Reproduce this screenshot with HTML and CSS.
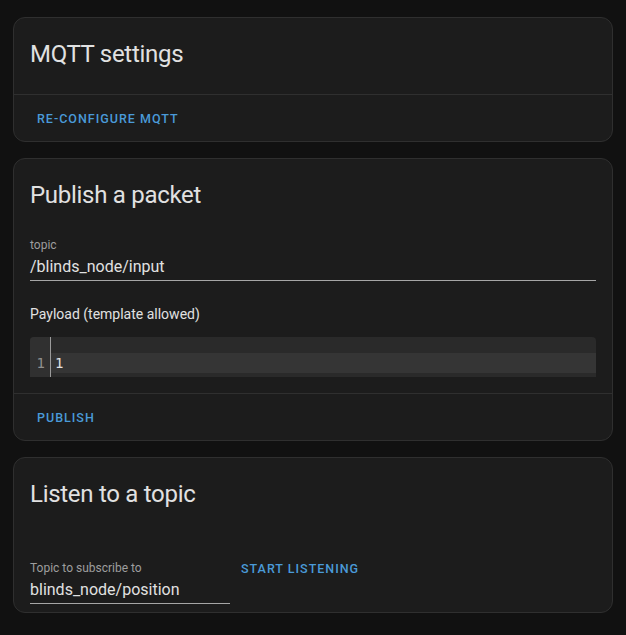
FILE: index.html
```html
<!DOCTYPE html>
<html lang="en">
<head>
<meta charset="utf-8">
<title>MQTT settings</title>
<link rel="stylesheet" href="styles.css">
</head>
<body>
<main class="page">
  <section class="card">
    <h1 class="card-header">MQTT settings</h1>
    <div class="card-actions">
      <button class="btn" type="button">Re-configure MQTT</button>
    </div>
  </section>

  <section class="card">
    <h1 class="card-header">Publish a packet</h1>
    <div class="card-content publish">
      <div class="field">
        <span class="field-label">topic</span>
        <span class="field-value">/blinds_node/input</span>
      </div>
      <p class="payload-label">Payload (template allowed)</p>
      <div class="editor">
        <div class="gutter"><div class="gutter-line">1</div></div>
        <div class="code"><div class="code-line">1</div></div>
      </div>
    </div>
    <div class="card-actions">
      <button class="btn" type="button">Publish</button>
    </div>
  </section>

  <section class="card">
    <h1 class="card-header">Listen to a topic</h1>
    <div class="card-content listen">
      <div class="field field-narrow">
        <span class="field-label">Topic to subscribe to</span>
        <span class="field-value">blinds_node/position</span>
      </div>
      <button class="btn btn-listen" type="button">Start listening</button>
    </div>
  </section>
</main>
</body>
</html>
```

FILE: styles.css
```css
* {
  box-sizing: border-box;
}

html, body {
  margin: 0;
  padding: 0;
  background: #111111;
}

body {
  font-family: Roboto, "Noto Sans", sans-serif;
  color: #e1e1e1;
}

.page {
  display: flex;
  flex-direction: column;
  gap: 16px;
  padding: 17px 13px 0;
}

.card {
  background: #1c1c1c;
  border: 1px solid #2f2f2f;
  border-radius: 12px;
}

.card-header {
  margin: 0;
  padding: 12px 16px 16px;
  font-size: 24px;
  font-weight: 400;
  line-height: 48px;
  letter-spacing: -0.012em;
  color: #e1e1e1;
}

.card-content {
  padding: 0 16px 16px;
}

.card-actions {
  border-top: 1px solid #2f2f2f;
  padding: 5px 15px;
  display: flex;
}

.btn {
  height: 36px;
  padding: 0 8px;
  border: 0;
  background: transparent;
  font-family: Roboto, "Noto Sans", sans-serif;
  font-size: 12.5px;
  font-weight: 500;
  letter-spacing: 1px;
  text-transform: uppercase;
  color: #4a9ad8;
  cursor: pointer;
}

.field {
  display: flex;
  flex-direction: column;
  border-bottom: 1px solid #a6a6a6;
  padding-bottom: 1px;
}

.publish .field {
  margin-top: 2px;
}

.field-label {
  font-size: 12px;
  line-height: 16px;
  color: #9e9e9e;
}

.field-value {
  margin-top: 2px;
  font-size: 16px;
  line-height: 24px;
  color: #e1e1e1;
}

.payload-label {
  margin: 23px 0 13px;
  font-size: 14px;
  line-height: 20px;
  color: #e1e1e1;
}

.editor {
  display: flex;
  height: 40px;
  background: #2a2a2a;
  border-radius: 4px 4px 0 0;
  overflow: hidden;
  font-family: "DejaVu Sans Mono", monospace;
  font-size: 14px;
}

.gutter {
  width: 21px;
  flex: none;
  background: #303030;
  border-right: 1px solid #9b9b9b;
  padding-top: 16px;
}

.gutter-line {
  height: 20px;
  line-height: 20px;
  text-align: right;
  padding-right: 5px;
  color: #8f8f8f;
}

.code {
  flex: 1;
  padding-top: 16px;
}

.code-line {
  height: 20px;
  line-height: 20px;
  padding-left: 4px;
  background: #353535;
  color: #e1e1e1;
}

.listen {
  display: flex;
  align-items: flex-start;
  padding-bottom: 8px;
}

.field-narrow {
  width: 200px;
  margin-top: 26px;
}

.btn-listen {
  margin-top: 16px;
  margin-left: 3px;
}
```
